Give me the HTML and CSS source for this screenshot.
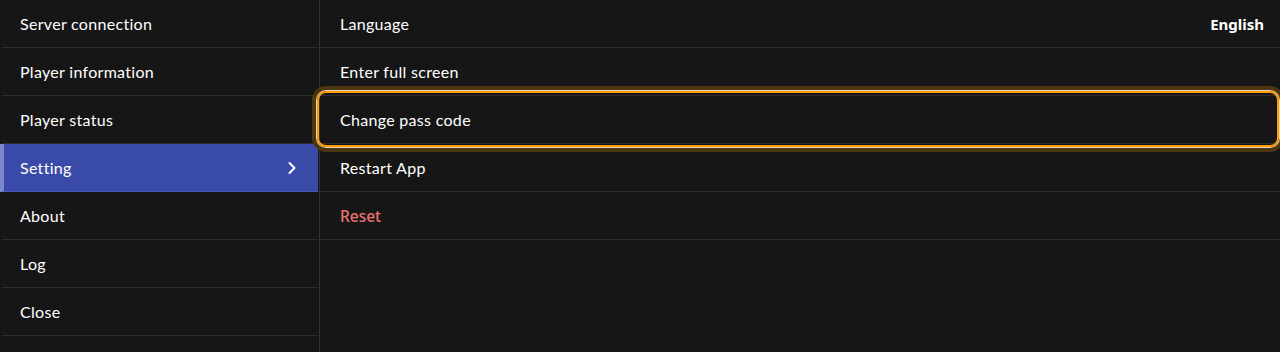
FILE: index.html
```html
<!DOCTYPE html>
<html lang="en">
<head>
  <meta charset="UTF-8" />
  <title>Setting</title>
  <link rel="stylesheet" href="styles.css">
</head>
<body>

<div class="layout">
  <!-- Left menu -->
  <ul class="menu">
    <li class="menu-item">Server connection</li>
    <li class="menu-item">Player information</li>
    <li class="menu-item">Player status</li>
    <li class="menu-item active">
      <span>Setting</span>
      <svg class="chevron" width="10" height="14" viewBox="0 0 10 14">
        <path d="M2.5 2 L7.5 7 L2.5 12" fill="none" stroke="#fff" stroke-width="2" stroke-linecap="round" stroke-linejoin="round"/>
      </svg>
    </li>
    <li class="menu-item">About</li>
    <li class="menu-item">Log</li>
    <li class="menu-item">Close</li>
  </ul>

  <!-- Right panel -->
  <ul class="options">
    <li class="option">
      <span>Language</span>
      <span class="option-value">English</span>
    </li>
    <li class="option">Enter full screen</li>
    <li class="option focused">Change pass code</li>
    <li class="option">Restart App</li>
    <li class="option danger">Reset</li>
  </ul>
</div>

</body>
</html>
```

FILE: styles.css
```css
* {
  box-sizing: border-box;
  margin: 0;
  padding: 0;
}

body {
  height: 100vh;
  background-color: #161616;
  color: #fff;
  font-family: Lato, 'Noto Sans', sans-serif;
  font-size: 16px;
  letter-spacing: 0.3px;
  overflow: hidden;
}

ul {
  list-style: none;
}

.layout {
  display: flex;
  height: 100%;
}

.menu {
  width: 320px;
  height: 100%;
  border-right: 1px solid #333;
  padding-right: 1px;
}

.menu-item {
  height: 48px;
  display: flex;
  align-items: center;
  justify-content: space-between;
  padding: 0 21px 0 18px;
  margin-left: 2px;
  border-bottom: 1px solid #2e2e2e;
}

.menu-item.active {
  background-color: #3a4aa9;
  margin-left: 0;
  border-left: 4px solid #7b88cc;
  padding-left: 16px;
  border-bottom-color: #4a59b5;
}

.chevron {
  display: block;
}

.options {
  flex: 1;
}

.option {
  height: 48px;
  display: flex;
  align-items: center;
  justify-content: space-between;
  padding: 0 16px 0 20px;
  border-bottom: 1px solid #2e2e2e;
  position: relative;
}

.option-value {
  font-family: 'Noto Sans', sans-serif;
  font-weight: 700;
  font-size: 15px;
  letter-spacing: 0;
}

.option.focused::after {
  content: "";
  position: absolute;
  top: -5px;
  bottom: -4px;
  left: -3px;
  right: 1px;
  border: 2px solid #ff9a00;
  border-radius: 9px;
  box-shadow: 0 0 0 1px #e6d3b4, 0 0 0 5px #4d3511;
}

.option.danger {
  color: #ea7272;
  font-family: 'Noto Sans', sans-serif;
  font-weight: 500;
  font-size: 15.5px;
  letter-spacing: 0;
}
```
